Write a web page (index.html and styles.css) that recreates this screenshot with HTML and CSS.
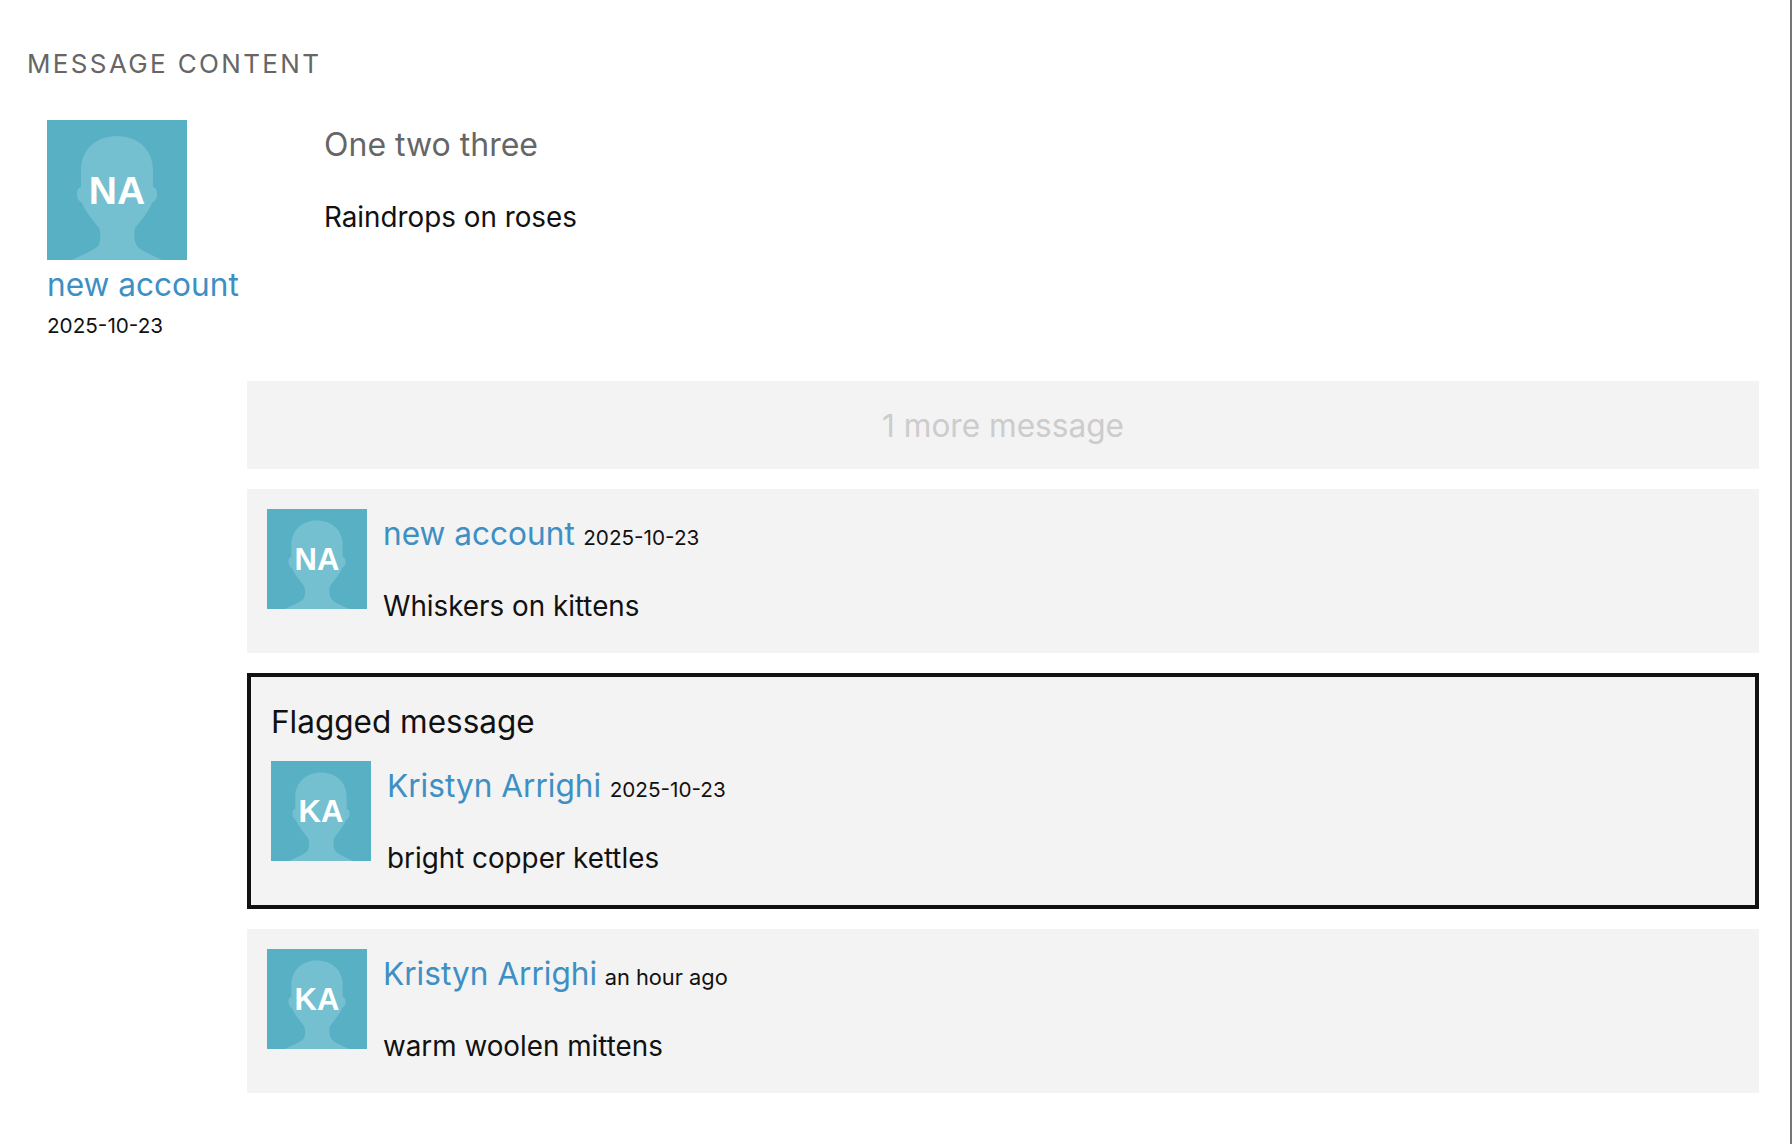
FILE: index.html
```html
<!DOCTYPE html>
<html lang="en">
<head>
<meta charset="utf-8">
<title>Message content</title>
<link rel="stylesheet" href="styles.css">
</head>
<body>
<svg class="defs" width="0" height="0" aria-hidden="true"><symbol id="sil" viewBox="0 0 140 140"><path d="M70 16C49 16 34 30 34 50L34 67C31 68 30 70 30 74C30 79 32 81 35 83C38 91 45 99 52 108C54 114 54 121 51 126C46 131 33 136 25 140L115 140C107 136 94 131 90 126C87 121 87 114 88 108C95 99 102 91 105 83C108 81 110 79 110 74C110 70 109 68 106 67L106 50C106 30 91 16 70 16Z"/></symbol></svg>
<main class="page">
  <h2 class="title">MESSAGE CONTENT</h2>
  <section class="first">
    <div class="author">
      <div class="avatar large"><svg class="sil"><use href="#sil"/></svg><span>NA</span></div>
      <a class="name big-name">new account</a>
      <div class="date">2025-10-23</div>
    </div>
    <div class="first-body">
      <h3 class="subject">One two three</h3>
      <p class="text">Raindrops on roses</p>
    </div>
  </section>
  <section class="thread">
    <div class="more">1 more message</div>
    <article class="reply">
      <div class="avatar"><svg class="sil"><use href="#sil"/></svg><span>NA</span></div>
      <div class="reply-body">
        <div class="meta"><a class="name">new account</a> <span class="date">2025-10-23</span></div>
        <p class="text">Whiskers on kittens</p>
      </div>
    </article>
    <article class="flagged">
      <div class="flag-label">Flagged message</div>
      <div class="flag-row">
        <div class="avatar"><svg class="sil"><use href="#sil"/></svg><span>KA</span></div>
        <div class="reply-body">
          <div class="meta"><a class="name">Kristyn Arrighi</a> <span class="date">2025-10-23</span></div>
          <p class="text">bright copper kettles</p>
        </div>
      </div>
    </article>
    <article class="reply">
      <div class="avatar"><svg class="sil"><use href="#sil"/></svg><span>KA</span></div>
      <div class="reply-body">
        <div class="meta"><a class="name">Kristyn Arrighi</a> <span class="date ago">an hour ago</span></div>
        <p class="text">warm woolen mittens</p>
      </div>
    </article>
  </section>
</main>
</body>
</html>
```
FILE: styles.css
```css
* { box-sizing: border-box; }
html, body { margin: 0; height: 100%; }
body {
  background: #fff;
  color: #111;
  font-family: "Inter", "Open Sans", sans-serif;
  border-right: 2px solid #777;
}
.defs { position: absolute; }
.page { padding: 48px 31px 0 27px; }
.title {
  margin: 0;
  font-size: 26px;
  line-height: 32px;
  font-weight: 400;
  letter-spacing: 2.35px;
  color: #666;
}
.first { display: flex; margin-top: 40px; margin-left: 20px; height: 261px; }
.author { width: 277px; flex: none; }
.avatar {
  position: relative;
  flex: none;
  width: 100px;
  height: 100px;
  background: #58b0c4;
  display: flex;
  align-items: center;
  justify-content: center;
}
.avatar.large { width: 140px; height: 140px; }
.sil { position: absolute; inset: 0; width: 100%; height: 100%; fill: #74bfd0; }
.avatar span {
  position: relative;
  color: #fff;
  font-family: "Liberation Sans", sans-serif;
  font-weight: 700;
  font-size: 31px;
  padding-top: 2px;
}
.avatar.large span { font-size: 39px; }
.name { color: #3d8fc4; font-size: 31.6px; }
.big-name { display: block; margin-top: 6px; line-height: 38px; }
.date { font-size: 20.7px; margin-left: 4px; }
.ago { font-size: 21.8px; margin-left: 3px; }
.author .date { margin-top: 7px; margin-left: 0; line-height: 29px; }
.first-body { padding-top: 5px; }
.subject { margin: 0; font-size: 32px; line-height: 40px; font-weight: 400; color: #666; }
.text { margin: 0; font-size: 27.8px; line-height: 36px; }
.first-body .text { margin-top: 34px; }
.thread { margin-left: 220px; display: flex; flex-direction: column; gap: 20px; }
.more {
  height: 88px;
  background: #f3f3f3;
  color: #ccc;
  font-size: 31.6px;
  padding-top: 1px;
  display: flex;
  align-items: center;
  justify-content: center;
}
.reply { background: #f3f3f3; height: 164px; padding: 20px; display: flex; gap: 16px; }
.flagged { background: #f3f3f3; border: 4px solid #111; height: 236px; padding: 25px 20px 20px; }
.flag-label { font-size: 31.5px; line-height: 40px; }
.flag-row { display: flex; gap: 16px; margin-top: 19px; }
.meta { line-height: 40px; margin-top: 5px; }
.reply-body .text { margin-top: 29px; }
```
